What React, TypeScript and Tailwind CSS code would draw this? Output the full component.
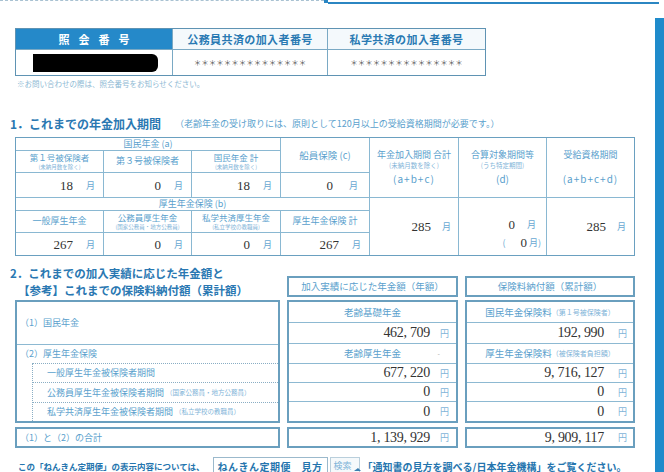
const jp = "font-['Noto_Sans_CJK_JP',sans-serif]";
const num = "font-['Liberation_Serif',serif] text-[#333]";
const lbl = "text-[#5a9fcd]";
const sub = "text-[#7fb4d8]";
const cell = "bg-white flex flex-col items-center justify-center leading-[1.15]";
const twoLine = "bg-white flex flex-col items-center justify-center leading-[1.45] overflow-hidden";
const head3 = "bg-white flex flex-col items-center justify-center leading-[1.45] row-span-3";

function MonthVal({ n, pr = "pr-[8px]", gap = "ml-[13px]" }: { n: string; pr?: string; gap?: string }) {
  return (
    <div className={"bg-white flex items-center justify-end " + pr}>
      <span className={num + " text-[13px] leading-none"}>{n}</span>
      <span className={gap + " text-[9px] leading-none text-[#6aa8d2]"}>月</span>
    </div>
  );
}

function YenRow({ n, h, pr, gap }: { n: string; h: string; pr: string; gap: string }) {
  return (
    <div className={"flex items-center justify-end border-t border-[#8db9d2] " + h + " " + pr}>
      <span className={num + " text-[14px] tracking-[-0.3px] leading-none"}>{n}</span>
      <span className={gap + " text-[9px] leading-none text-[#7fb4d8]"}>円</span>
    </div>
  );
}

function LabelRow({ main, note, h, top = true }: { main: string; note?: string; h: string; top?: boolean }) {
  return (
    <div className={"flex items-center justify-center " + h + (top ? " border-t border-[#8db9d2]" : "")}>
      <span className={"text-[9.5px] " + lbl}>{main}</span>
      {note && <span className={"text-[7px] " + sub}>{note}</span>}
    </div>
  );
}

function MoneyBox({ w, title, rows }: { w: string; title: string; rows: React.ReactNode }) {
  return (
    <div className={"flex flex-col " + w}>
      <div className="mt-[11px] h-[21px] border-2 border-[#6a9fbe] flex items-center justify-center">
        <span className={"text-[9.5px] " + lbl}>{title}</span>
      </div>
      <div className="mt-[3px] h-[123px] border-2 border-[#6a9fbe] flex flex-col">{rows}</div>
    </div>
  );
}

export default function App() {
  return (
    <div className={"w-[664px] h-[472px] overflow-hidden bg-white flex flex-col " + jp}>
      <div className="h-[4px] w-[659px] flex">
        <div className="w-[324px] border-t border-dashed border-[#a9c2d2]" />
        <div className="w-[4px] h-[3px] bg-[#2a86c4]" />
        <div className="flex-1 h-[2px] mt-[2px] bg-[#2b86c2]" />
      </div>
      <div className="flex">
        <div className="w-[655px] flex flex-col">
          {/* 照会番号 */}
          <div className="mt-[24px] ml-[15px] w-[471px] grid grid-cols-[156px_154px_157px] grid-rows-[20px_25px] gap-px bg-[#7aa9c4] border border-[#5f93b3]">
            <div className="bg-[#2589c9] flex items-center justify-center">
              <span className="text-white text-[11px] font-bold tracking-[9px] pl-[9px]">照会番号</span>
            </div>
            <div className="bg-[#f4f9fc] flex items-center justify-center">
              <span className="text-[#2a7ab3] text-[11px] font-bold tracking-[0.4px]">公務員共済の加入者番号</span>
            </div>
            <div className="bg-[#f4f9fc] flex items-center justify-center">
              <span className="text-[#2a7ab3] text-[11px] font-bold tracking-[0.4px]">私学共済の加入者番号</span>
            </div>
            <div className="bg-white flex items-center pl-[17px]">
              <div className="w-[125px] h-[18px] bg-black rounded-r-[6px]" />
            </div>
            <div className="bg-white flex items-center justify-center">
              <span className="text-[#555] text-[7.5px] leading-none">＊＊＊＊＊＊＊＊＊＊＊＊＊＊＊</span>
            </div>
            <div className="bg-white flex items-center justify-center">
              <span className="text-[#555] text-[7.5px] leading-none">＊＊＊＊＊＊＊＊＊＊＊＊＊＊＊</span>
            </div>
          </div>
          <div className="mt-[3px] ml-[17px] h-[9px] leading-[9px] text-[7.5px] text-[#8cb8d3]">
            ※お問い合わせの際は、照会番号をお知らせください。
          </div>

          {/* 1. */}
          <div className="mt-[28px] h-[16px] flex items-center">
            <span className="ml-[10px] text-[12px] font-bold text-[#2a78b2]">1．これまでの年金加入期間</span>
            <span className={"ml-[14px] text-[9px] " + lbl}>（老齢年金の受け取りには、原則として120月以上の受給資格期間が必要です。）</span>
          </div>
          <div className="mt-[5px] ml-[15px] w-[620px] grid grid-cols-[87px_87px_88px_88px_88px_87px_87px] grid-rows-[12px_21px_24px_12px_21px_22px] gap-px bg-[#8ab8d2] border border-[#6aa0c0]">
            <div className={cell + " col-span-3"}>
              <span className={"text-[9px] " + lbl}>国民年金 (a)</span>
            </div>
            <div className={cell + " row-span-2"}>
              <span className={"text-[9.5px] " + lbl}>船員保険 (c)</span>
            </div>
            <div className={head3}>
              <span className={"text-[9px] " + lbl}>年金加入期間 合計</span>
              <span className={"text-[6.5px] " + sub}>(未納月数を除く)</span>
              <span className={"mt-[2px] text-[10px] tracking-[1px] " + lbl}>(a+b+c)</span>
            </div>
            <div className={head3}>
              <span className={"text-[9px] " + lbl}>合算対象期間等</span>
              <span className={"text-[6.5px] " + sub}>(うち特定期間)</span>
              <span className={"mt-[2px] text-[10px] " + lbl}>(d)</span>
            </div>
            <div className={head3}>
              <span className={"text-[9px] " + lbl}>受給資格期間</span>
              <span className="h-[9px]" />
              <span className={"mt-[2px] text-[10px] tracking-[1px] " + lbl}>(a+b+c+d)</span>
            </div>

            <div className={twoLine}>
              <span className={"text-[8.5px] " + lbl}>第１号被保険者</span>
              <span className={"text-[5.5px] " + sub}>(未納月数を除く)</span>
            </div>
            <div className={cell}>
              <span className={"text-[9px] " + lbl}>第３号被保険者</span>
            </div>
            <div className={twoLine}>
              <span className={"text-[8.5px] " + lbl}>国民年金 計</span>
              <span className={"text-[5.5px] " + sub}>(未納月数を除く)</span>
            </div>

            <MonthVal n="18" />
            <MonthVal n="0" />
            <MonthVal n="18" />
            <MonthVal n="0" pr="pr-[11px]" gap="ml-[16px]" />

            <div className={cell + " col-span-4"}>
              <span className={"text-[9px] " + lbl}>厚生年金保険 (b)</span>
            </div>
            <div className="row-span-3 bg-white flex items-center justify-end pr-[7px]">
              <span className={num + " text-[13px] leading-none"}>285</span>
              <span className="ml-[11px] text-[9px] leading-none text-[#6aa8d2]">月</span>
            </div>
            <div className="row-span-3 bg-white flex flex-col items-end justify-center pt-[14px] gap-[5px]">
              <div className="flex items-center pr-[10px]">
                <span className={num + " text-[13px] leading-none"}>0</span>
                <span className="ml-[12px] text-[9px] leading-none text-[#6aa8d2]">月</span>
              </div>
              <div className="flex items-center pr-[5px]">
                <span className="mr-[15px] text-[9px] leading-none text-[#6aa8d2]">(</span>
                <span className={num + " text-[13px] leading-none"}>0</span>
                <span className="ml-[2px] text-[9px] leading-none text-[#6aa8d2]">月)</span>
              </div>
            </div>
            <div className="row-span-3 bg-white flex items-center justify-end pr-[8px]">
              <span className={num + " text-[13px] leading-none"}>285</span>
              <span className="ml-[11px] text-[9px] leading-none text-[#6aa8d2]">月</span>
            </div>

            <div className={cell}>
              <span className={"text-[9px] " + lbl}>一般厚生年金</span>
            </div>
            <div className={twoLine}>
              <span className={"text-[8.5px] " + lbl}>公務員厚生年金</span>
              <span className={"text-[5.5px] " + sub}>(国家公務員・地方公務員)</span>
            </div>
            <div className={twoLine}>
              <span className={"text-[8.5px] " + lbl}>私学共済厚生年金</span>
              <span className={"text-[5.5px] " + sub}>(私立学校の教職員)</span>
            </div>
            <div className={cell}>
              <span className={"text-[9px] " + lbl}>厚生年金保険 計</span>
            </div>

            <MonthVal n="267" />
            <MonthVal n="0" />
            <MonthVal n="0" />
            <MonthVal n="267" />
          </div>

          {/* 2. */}
          <div className="mt-[9px] ml-[15px] flex">
            <div className="w-[265px] flex flex-col">
              <div className="-ml-[5px] h-[35px] flex flex-col text-[11.5px] font-bold text-[#2a78b2] leading-[16px]">
                <span>2．これまでの加入実績に応じた年金額と</span>
                <span className="pl-[8px] mt-[1px]">【参考】これまでの保険料納付額（累計額）</span>
              </div>
              <div className="h-[123px] border-2 border-[#6a9fbe] flex flex-col">
                <div className="h-[42px] flex items-center pl-[3px]">
                  <span className={"text-[9px] " + lbl}>（1）国民年金</span>
                </div>
                <div className="h-[19px] border-t border-[#8db9d2] flex items-center pl-[3px]">
                  <span className={"text-[9px] " + lbl}>（2）厚生年金保険</span>
                </div>
                <div className="ml-[15px] flex-1 border-l border-dotted border-[#8aaec4] flex flex-col">
                  <div className="h-[19px] border-t border-dotted border-[#8aaec4] flex items-center pl-[14px]">
                    <span className={"text-[9px] " + lbl}>一般厚生年金被保険者期間</span>
                  </div>
                  <div className="h-[20px] border-t border-dotted border-[#8aaec4] flex items-center pl-[14px]">
                    <span className={"text-[9px] " + lbl}>公務員厚生年金被保険者期間</span>
                    <span className={"ml-[2px] text-[6.5px] " + sub}>（国家公務員・地方公務員）</span>
                  </div>
                  <div className="flex-1 border-t border-dotted border-[#8aaec4] flex items-center pl-[14px]">
                    <span className={"text-[9px] " + lbl}>私学共済厚生年金被保険者期間</span>
                    <span className={"ml-[2px] text-[6.5px] " + sub}>（私立学校の教職員）</span>
                  </div>
                </div>
              </div>
              <div className="mt-[4px] h-[21px] border-2 border-[#6a9fbe] flex items-center pl-[3px]">
                <span className={"text-[9px] " + lbl}>（1）と（2）の合計</span>
              </div>
            </div>

            <div className="ml-[7px] flex flex-col">
              <MoneyBox
                w="w-[171px]"
                title="加入実績に応じた年金額（年額）"
                rows={
                  <>
                    <LabelRow main="老齢基礎年金" h="h-[20px]" top={false} />
                    <YenRow n="462, 709" h="h-[21px]" pr="pr-[7px]" gap="ml-[10px]" />
                    <div className="h-[20px] border-t border-[#8db9d2] flex items-center justify-center relative">
                      <span className={"text-[9.5px] " + lbl}>老齢厚生年金</span>
                      <span className="absolute right-[16px] top-[4px] text-[7px] text-[#aaa]">-</span>
                    </div>
                    <YenRow n="677, 220" h="h-[19px]" pr="pr-[7px]" gap="ml-[10px]" />
                    <YenRow n="0" h="h-[19px]" pr="pr-[7px]" gap="ml-[10px]" />
                    <YenRow n="0" h="h-[20px]" pr="pr-[7px]" gap="ml-[10px]" />
                  </>
                }
              />
              <div className="mt-[4px] h-[21px] border-2 border-[#6a9fbe] flex items-center justify-end pr-[7px]">
                <span className={num + " text-[14px] tracking-[-0.3px] leading-none"}>1, 139, 929</span>
                <span className="ml-[10px] text-[9px] leading-none text-[#7fb4d8]">円</span>
              </div>
            </div>

            <div className="ml-[7px] flex flex-col">
              <MoneyBox
                w="w-[170px]"
                title="保険料納付額（累計額）"
                rows={
                  <>
                    <LabelRow main="国民年金保険料" note="（第１号被保険者）" h="h-[20px]" top={false} />
                    <YenRow n="192, 990" h="h-[21px]" pr="pr-[6px]" gap="ml-[14px]" />
                    <LabelRow main="厚生年金保険料" note="（被保険者負担額）" h="h-[20px]" />
                    <YenRow n="9, 716, 127" h="h-[19px]" pr="pr-[6px]" gap="ml-[14px]" />
                    <YenRow n="0" h="h-[19px]" pr="pr-[6px]" gap="ml-[14px]" />
                    <YenRow n="0" h="h-[20px]" pr="pr-[6px]" gap="ml-[14px]" />
                  </>
                }
              />
              <div className="mt-[4px] h-[21px] border-2 border-[#6a9fbe] flex items-center justify-end pr-[6px]">
                <span className={num + " text-[14px] tracking-[-0.3px] leading-none"}>9, 909, 117</span>
                <span className="ml-[14px] text-[9px] leading-none text-[#7fb4d8]">円</span>
              </div>
            </div>
          </div>

          {/* bottom */}
          <div className="mt-[9px] h-[18px] flex items-center">
            <span className="ml-[18px] text-[8.5px] font-bold text-[#2575ae]">この「ねんきん定期便」の表示内容については、</span>
            <div className="ml-[8px] w-[115px] h-[18px] border border-[#9bb9cc] flex items-center justify-center">
              <span className="text-[10px] font-bold text-[#2575ae] tracking-[0.5px]">ねんきん定期便　見方</span>
            </div>
            <div className="ml-[2px] w-[30px] h-[18px] border border-[#b9cfdc] bg-[#f5f9fb] flex items-center justify-center relative">
              <span className="text-[9px] text-[#7fb4d8] -ml-[4px]">検索</span>
              <svg className="absolute right-[-3px] bottom-[2px]" width="9" height="7" viewBox="0 0 9 7">
                <path d="M1 6 L8 6 L5 3 Z" fill="#3a7fb0" />
              </svg>
            </div>
            <span className="ml-[3px] text-[10px] font-bold text-[#2575ae]">「通知書の見方を調べる/日本年金機構」をご覧ください。</span>
          </div>
        </div>
        <div className="w-[9px] mt-[14px] h-[480px] bg-[#1f8bcb]" />
      </div>
    </div>
  );
}
